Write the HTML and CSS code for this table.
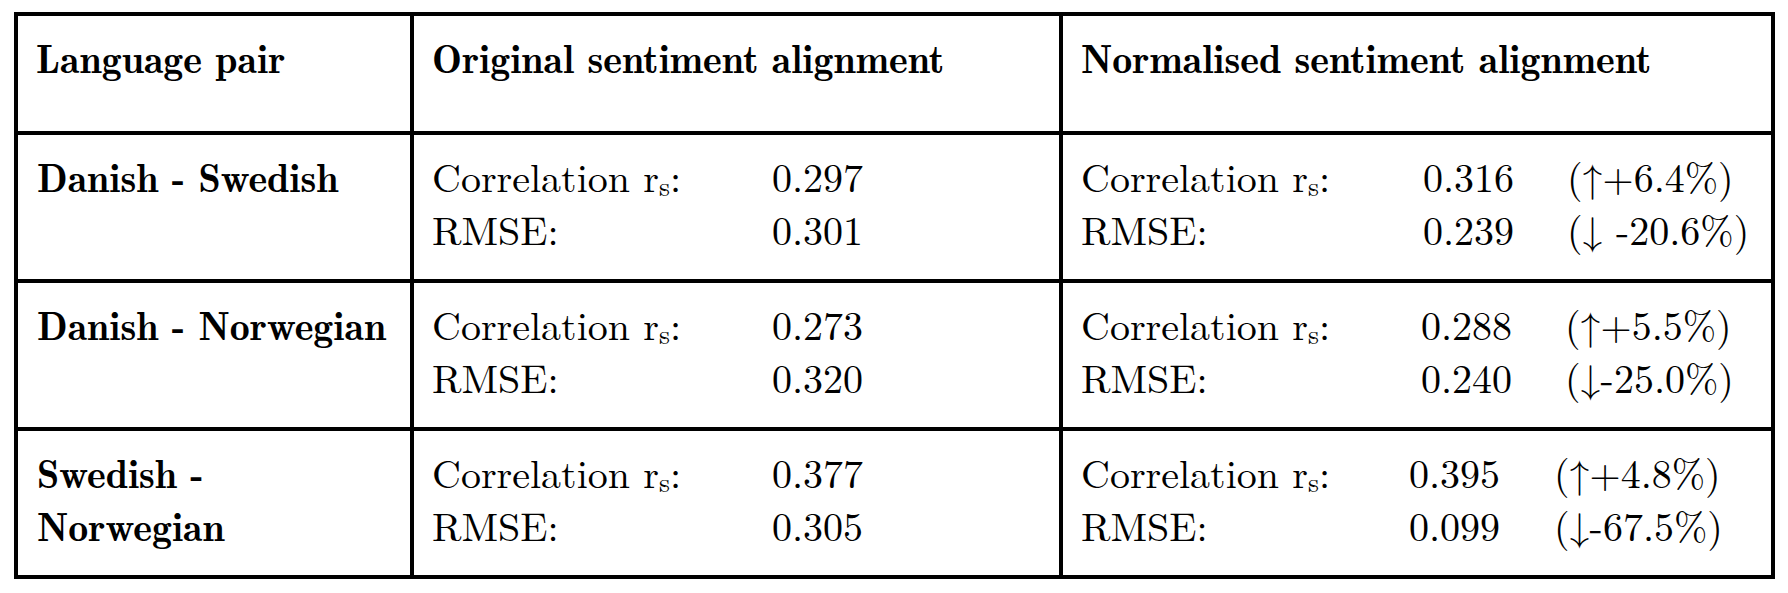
FILE: index.html
```html
<!DOCTYPE html>
<html lang="en">
<head>
<meta charset="utf-8">
<title>Sentiment alignment</title>
<link rel="stylesheet" href="styles.css">
</head>
<body>
<div class="table">
  <div class="cell head">Language pair</div>
  <div class="cell head">Original sentiment alignment</div>
  <div class="cell head">Normalised sentiment alignment</div>

  <div class="cell pair">Danish - Swedish</div>
  <div class="cell">
    <div class="stats orig">
      <span>Correlation r<sub>s</sub>:</span><span>0.297</span>
      <span>RMSE:</span><span>0.301</span>
    </div>
  </div>
  <div class="cell">
    <div class="stats norm r1">
      <span>Correlation r<sub>s</sub>:</span><span>0.316</span><span>(↑+6.4%)</span>
      <span>RMSE:</span><span>0.239</span><span>(↓ -20.6%)</span>
    </div>
  </div>

  <div class="cell pair">Danish - Norwegian</div>
  <div class="cell">
    <div class="stats orig">
      <span>Correlation r<sub>s</sub>:</span><span>0.273</span>
      <span>RMSE:</span><span>0.320</span>
    </div>
  </div>
  <div class="cell">
    <div class="stats norm r2">
      <span>Correlation r<sub>s</sub>:</span><span>0.288</span><span>(↑+5.5%)</span>
      <span>RMSE:</span><span>0.240</span><span>(↓-25.0%)</span>
    </div>
  </div>

  <div class="cell pair">Swedish - Norwegian</div>
  <div class="cell">
    <div class="stats orig">
      <span>Correlation r<sub>s</sub>:</span><span>0.377</span>
      <span>RMSE:</span><span>0.305</span>
    </div>
  </div>
  <div class="cell">
    <div class="stats norm r3">
      <span>Correlation r<sub>s</sub>:</span><span>0.395</span><span>(↑+4.8%)</span>
      <span>RMSE:</span><span>0.099</span><span>(↓-67.5%)</span>
    </div>
  </div>
</div>
</body>
</html>
```

FILE: styles.css
```css
html, body {
  margin: 0;
  padding: 0;
  background: #ffffff;
}

body {
  color: #000000;
  font-family: "Latin Modern Roman", "Liberation Serif", serif;
}

.table {
  display: grid;
  grid-template-columns: 392px 645px 708px;
  grid-template-rows: 115px 144px 144px 144px;
  gap: 4px;
  padding: 4px;
  background: #000000;
  margin: 12px 0 0 14px;
  width: max-content;
}

.cell {
  background: #ffffff;
  padding: 14px 14px 0 18px;
  font-family: "Latin Modern Roman", "Liberation Serif", serif;
  font-size: 40px;
  line-height: 53px;
  color: #000000;
}

.head,
.pair {
  font-family: "Latin Modern Roman Demi", "LM Roman Demi 10", "Latin Modern Roman", "Liberation Serif", serif;
  font-weight: 600;
}

.pair {
  padding-left: 19px;
}

.stats {
  display: grid;
  white-space: nowrap;
}

.stats.orig {
  grid-template-columns: 340px auto;
}

.stats.norm.r1 {
  grid-template-columns: 342px 144px auto;
}

.stats.norm.r2 {
  grid-template-columns: 340px 144px auto;
}

.stats.norm.r3 {
  grid-template-columns: 328px 145px auto;
}

sub {
  font-size: 0.7em;
  line-height: 0;
  vertical-align: -0.15em;
}
```
